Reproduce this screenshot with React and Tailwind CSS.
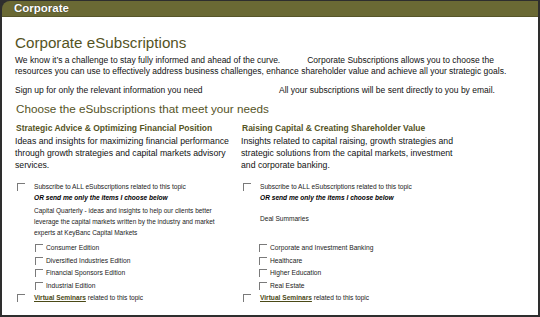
import React from 'react';

const olive = 'text-[#55541f]';

const Box = ({ className = '' }) => (
    <span className={`inline-block w-[8px] h-[8px] border-t border-l border-[#7a7a7a] bg-white shrink-0 ${className}`}></span>
);

const TopicColumn = ({ title, description, children }) => (
    <div className="w-[226px] shrink-0 flex flex-col">
        <h3 className={`text-[8.5px] leading-[11px] font-bold ${olive} pl-[1px]`}>{title}</h3>
        <p className="mt-[1.5px] text-[8.7px] leading-[12px] text-[#111] w-[222px]">{description}</p>

        <div className="mt-[10.5px] flex items-center h-[11px] text-[6.6px] text-[#222]">
            <Box className="ml-[2px]" />
            <span className="ml-[9px]">Subscribe to ALL eSubscriptions related to this topic</span>
        </div>
        <div className="h-[11px] flex items-center pl-[19px] text-[6.6px] font-bold italic text-black">
            OR send me only the items I choose below
        </div>
        {children}
    </div>
);

const ItemList = ({ items, indent }) => (
    <div className={`mt-[4.5px] flex flex-col ${indent}`}>
        {items.map((item) => (
            <div key={item} className="h-[12.6px] flex items-center text-[6.7px] text-[#222]">
                <Box />
                <span className="ml-[3px]">{item}</span>
            </div>
        ))}
    </div>
);

const Seminars = () => (
    <div className="h-[12px] flex items-center text-[6.6px] text-[#222]">
        <Box className="ml-[2px]" />
        <span className="ml-[9px]">
            <a href="#" className="font-bold text-[#4b4a17] underline">Virtual Seminars</a> related to this topic
        </span>
    </div>
);

export default function App() {
    return (
        <div className="w-[540px] h-[317px] bg-[#2e2e2e] pt-[1px] pl-[2px] pr-[2px] pb-[2px] flex flex-col font-['Liberation_Sans',Arial,sans-serif]">
            <div className="h-[16px] shrink-0 bg-[#6a6934] rounded-tl-[8px] border-b border-[#57562a] flex items-center pl-[12px]">
                <span className="text-white font-bold text-[11.5px] leading-none [text-shadow:0_0_1px_#222]">Corporate</span>
            </div>

            <div className="flex-1 bg-white pl-[13px] flex flex-col">
                <h1 className={`mt-[17px] text-[15.2px] leading-[18px] ${olive}`}>Corporate eSubscriptions</h1>

                <p className="mt-[2.5px] text-[8.5px] leading-[11px] text-[#111]">
                    We know it&rsquo;s a challenge to stay fully informed and ahead of the curve.
                    <span className="inline-block w-[27px]"></span>
                    Corporate Subscriptions allows you to choose the
                    <br />
                    resources you can use to effectively address business challenges, enhance shareholder value and achieve all your strategic goals.
                </p>

                <p className="mt-[8px] text-[8.5px] leading-[11px] text-[#111] flex">
                    <span className="w-[264px] shrink-0">Sign up for only the relevant information you need</span>
                    <span>All your subscriptions will be sent directly to you by email.</span>
                </p>

                <h2 className={`mt-[6.5px] text-[11.7px] leading-[14px] ${olive} pl-[1px]`}>Choose the eSubscriptions that meet your needs</h2>

                <div className="mt-[6.5px] flex">
                    <TopicColumn
                        title="Strategic Advice & Optimizing Financial Position"
                        description="Ideas and insights for maximizing financial performance through growth strategies and capital markets advisory services."
                    >
                        <p className="mt-[1px] ml-[19px] text-[6.5px] leading-[11px] text-[#222] w-[198px]">
                            Capital Quarterly - ideas and insights to help our clients better leverage the capital markets written by the industry and market experts at KeyBanc Capital Markets
                        </p>
                        <ItemList
                            indent="pl-[20px]"
                            items={['Consumer Edition', 'Diversified Industries Edition', 'Financial Sponsors Edition', 'Industrial Edition']}
                        />
                        <Seminars />
                    </TopicColumn>

                    <TopicColumn
                        title="Raising Capital & Creating Shareholder Value"
                        description="Insights related to capital raising, growth strategies and strategic solutions from the capital markets, investment and corporate banking."
                    >
                        <div className="mt-[1px] h-[33px] pl-[19px] pt-[8px] text-[6.6px] leading-[11px] text-[#222]">
                            Deal Summaries
                        </div>
                        <ItemList
                            indent="pl-[18px]"
                            items={['Corporate and Investment Banking', 'Healthcare', 'Higher Education', 'Real Estate']}
                        />
                        <Seminars />
                    </TopicColumn>
                </div>
            </div>
        </div>
    );
}
